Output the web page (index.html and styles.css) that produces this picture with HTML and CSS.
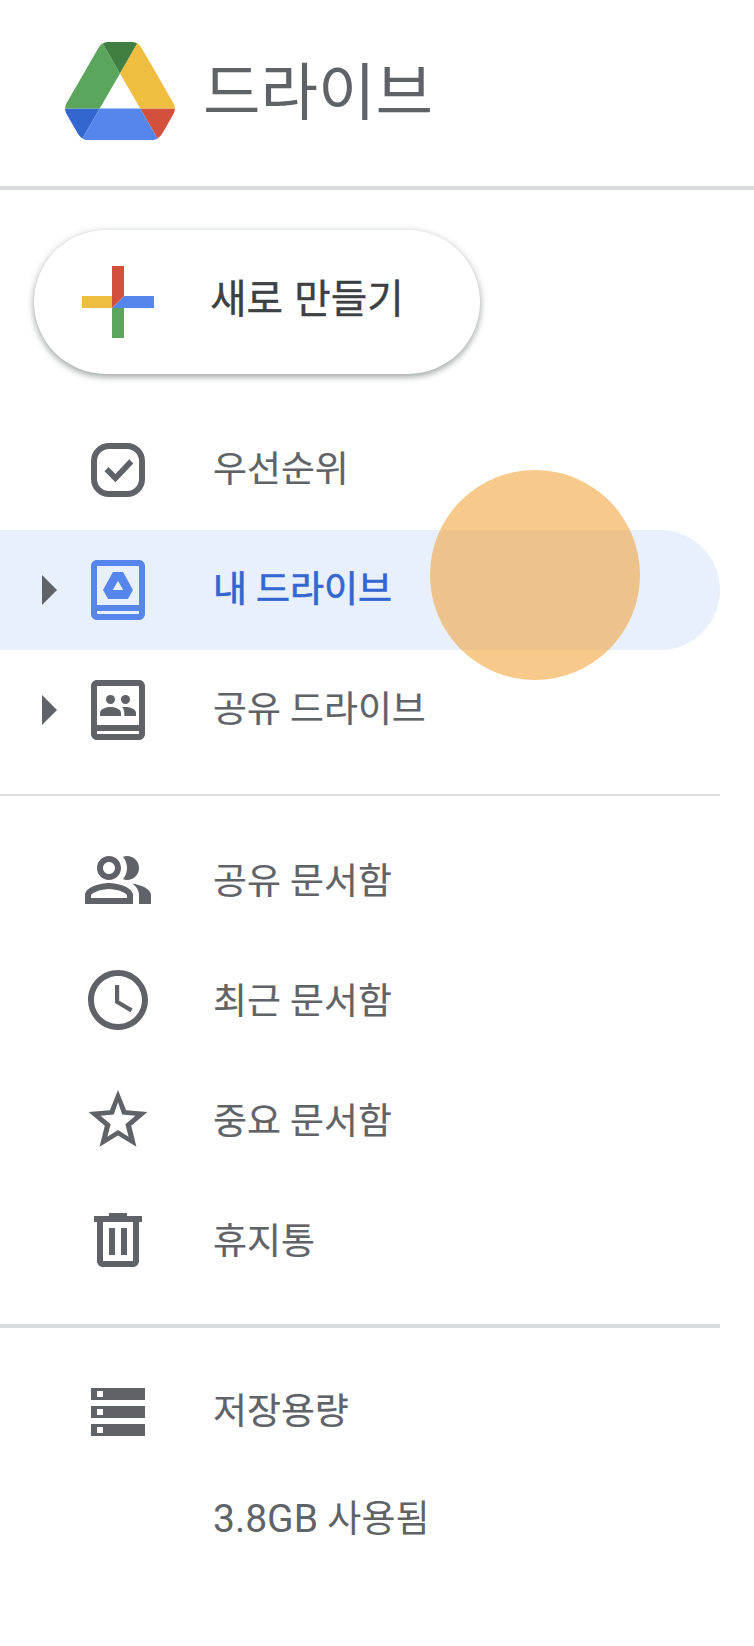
FILE: index.html
```
<!DOCTYPE html>
<html lang="ko">

<head>
    <meta charset="UTF-8">
    <meta name="viewport" content="width=device-width, initial-scale=1.0">
    <title>드라이브</title>
    <link rel="stylesheet" href="styles.css">
</head>

<body>

    <header class="header">
        <svg class="logo" viewBox="0 0 87.3 78">
            <path fill="#3367cf" d="m6.6 66.85 3.85 6.65c.8 1.4 1.95 2.5 3.3 3.3l13.75-23.8h-27.5c0 1.55.4 3.1 1.2 4.5z"/>
            <path fill="#5ba55c" d="m43.65 25-13.75-23.8c-1.35.8-2.5 1.9-3.3 3.3l-25.4 44a9.06 9.06 0 0 0-1.2 4.5h27.5z"/>
            <path fill="#d4503e" d="m73.55 76.8c1.35-.8 2.5-1.9 3.3-3.3l1.6-2.75 7.65-13.25c.8-1.4 1.2-2.95 1.2-4.5h-27.5z"/>
            <path fill="#417e41" d="m43.65 25 13.75-23.8c-1.35-.8-2.9-1.2-4.5-1.2h-18.5c-1.6 0-3.15.45-4.5 1.2z"/>
            <path fill="#5686ec" d="m59.8 53h-32.3l-13.75 23.8c1.35.8 2.9 1.2 4.5 1.2h50.8c1.6 0 3.15-.45 4.5-1.2z"/>
            <path fill="#efbd40" d="m73.4 26.5-12.7-22c-.8-1.4-1.95-2.5-3.3-3.3l-13.75 23.8 16.15 28h27.45c0-1.55-.4-3.1-1.2-4.5z"/>
        </svg>
        <h1 class="title">드라이브</h1>
    </header>

    <button type="button" class="new-button">
        <svg class="icon" viewBox="0 0 24 24">
            <path fill="#efbd40" d="M0 10h10v4H0z"/>
            <path fill="#5ba55c" d="M10 14h4v10h-4z"/>
            <path fill="#5686ec" d="M14 10h10v4H10z"/>
            <path fill="#d4503e" d="M10 0h4v10l-4 4z"/>
        </svg>
        <span class="new-text">새로 만들기</span>
    </button>

    <nav class="menu">
        <a class="item">
            <svg class="icon" viewBox="0 0 24 24">
                <rect x="4" y="4" width="16" height="16" rx="5" fill="none" stroke="currentColor" stroke-width="2"/>
                <path d="M7.5 12.4 8.85 11l2.3 2.3 4.6-4.85L17.1 9.8l-5.95 6.3z"/>
            </svg>
            <span class="label">우선순위</span>
        </a>
        <a class="item active">
            <span class="arrow"></span>
            <svg class="icon" viewBox="0 0 24 24">
                <path fill-rule="evenodd" d="M5 2h14c1.1 0 2 .9 2 2v16c0 1.1-.9 2-2 2H5c-1.1 0-2-.9-2-2V4c0-1.1.9-2 2-2zm0 2v13h14V4zm0 15v1h14v-1z"/>
                <path fill-rule="evenodd" d="M10.3 6h3.4L17 12l-1.7 3H8.7L7 12zM12 9l-1.75 3h3.5z"/>
            </svg>
            <span class="label">내 드라이브</span>
            <span class="pointer"></span>
        </a>
        <a class="item">
            <span class="arrow"></span>
            <svg class="icon" viewBox="0 0 24 24">
                <path fill-rule="evenodd" d="M5 2h14c1.1 0 2 .9 2 2v16c0 1.1-.9 2-2 2H5c-1.1 0-2-.9-2-2V4c0-1.1.9-2 2-2zm0 2v13h14V4zm0 15v1h14v-1z"/>
                <circle cx="9.5" cy="8.5" r="1.5"/>
                <circle cx="14.5" cy="8.5" r="1.5"/>
                <path d="M9.5 11C8.2 11 6 11.65 6 13v1h7v-1c0-1.35-2.2-2-3.5-2z"/>
                <path d="M14.5 11c-.35 0-.75.04-1.15.12.5.45.75 1.08.75 1.88v1H18v-1c0-1.35-2.2-2-3.5-2z"/>
            </svg>
            <span class="label">공유 드라이브</span>
        </a>
    </nav>

    <nav class="menu second">
        <a class="item">
            <svg class="icon" viewBox="0 0 24 24">
                <path d="M16.67 13.13C18.04 14.06 19 15.32 19 17v3h4v-3c0-2.18-3.57-3.47-6.33-3.87z"/>
                <path d="M15 12c2.21 0 4-1.79 4-4s-1.79-4-4-4c-.47 0-.91.1-1.33.24C14.5 5.27 15 6.58 15 8s-.5 2.73-1.33 3.76c.42.14.86.24 1.33.24z"/>
                <path d="M9 12c2.21 0 4-1.79 4-4s-1.79-4-4-4-4 1.79-4 4 1.79 4 4 4zm0-6c1.1 0 2 .9 2 2s-.9 2-2 2-2-.9-2-2 .9-2 2-2z"/>
                <path d="M9 13c-2.67 0-8 1.34-8 4v3h16v-3c0-2.66-5.33-4-8-4zm6 5H3v-.99C3.2 16.29 6.3 15 9 15s5.8 1.29 6 2v1z"/>
            </svg>
            <span class="label">공유 문서함</span>
        </a>
        <a class="item">
            <svg class="icon" viewBox="0 0 24 24">
                <path d="M12 2C6.47 2 2 6.48 2 12s4.47 10 10 10 10-4.48 10-10S17.52 2 12 2zm0 18c-4.42 0-8-3.58-8-8s3.58-8 8-8 8 3.58 8 8-3.58 8-8 8zm.4-13H11v6l5.15 3.05.7-1.2-4.45-2.6z"/>
            </svg>
            <span class="label">최근 문서함</span>
        </a>
        <a class="item">
            <svg class="icon" viewBox="0 0 24 24">
                <path fill-rule="evenodd" d="M12 2l2.7 6.75 7.1.55-5.4 4.65 1.75 6.95L12 17.2l-6.15 3.7 1.75-6.95L2.2 9.3l7.1-.55zM12 6.1l-1.4 4.1-4.4.35 3.35 2.9-1.1 4.1L12 15.3l3.55 2.25-1.1-4.1 3.35-2.9-4.4-.35z"/>
            </svg>
            <span class="label">중요 문서함</span>
        </a>
        <a class="item">
            <svg class="icon" viewBox="0 0 24 24">
                <path d="M15 4V3H9v1H4v2h1v13c0 1.1.9 2 2 2h10c1.1 0 2-.9 2-2V6h1V4h-5zm2 15H7V6h10v13zM9 8h2v9H9zm4 0h2v9h-2z"/>
            </svg>
            <span class="label">휴지통</span>
        </a>
    </nav>

    <section class="storage">
        <a class="item">
            <svg class="icon" viewBox="0 0 24 24">
                <path fill-rule="evenodd" d="M3 4h18v4H3zm2 1v2h2V5zM3 10h18v4H3zm2 1v2h2v-2zM3 16h18v4H3zm2 1v2h2v-2z"/>
            </svg>
            <span class="label">저장용량</span>
        </a>
        <p class="used"><span class="amount">3.8GB</span> 사용됨</p>
    </section>

</body>

</html>
```
FILE: styles.css
```
* {
    box-sizing: border-box;
}

body {
    margin: 0;
    background-color: #fff;
    color: #5f6368;
    font-family: "Noto Sans CJK KR", sans-serif;
}

.header {
    display: flex;
    align-items: center;
    height: 190px;
    padding: 0 0 4px 65px;
    border-bottom: 4px solid #dadce0;
}

.logo {
    width: 110px;
    height: 98px;
}

.title {
    margin: 0 0 6px 28px;
    font-size: 62.5px;
    font-weight: 400;
    line-height: 90px;
}

.new-button {
    display: flex;
    align-items: center;
    width: 446px;
    height: 144px;
    margin: 40px 0 0 34px;
    padding: 0 0 0 48px;
    border: none;
    border-radius: 72px;
    background-color: #fff;
    color: #3c4043;
    font-family: inherit;
    box-shadow: 0 3px 6px rgba(60, 64, 67, 0.4), 0 1px 9px rgba(60, 64, 67, 0.15);
}

.new-text {
    margin-left: 56px;
    padding-bottom: 12px;
    font-size: 39.7px;
    font-weight: 400;
    line-height: 60px;
    -webkit-text-stroke: 0.4px currentColor;
}

.icon {
    flex: none;
    width: 72px;
    height: 72px;
    fill: currentColor;
}

.menu {
    width: 720px;
    padding: 36px 0 24px;
    border-bottom: 2px solid #dadce0;
}

.menu.second {
    padding: 24px 0;
    border-bottom-width: 4px;
}

.item {
    position: relative;
    display: flex;
    align-items: center;
    height: 120px;
    padding-left: 82px;
}

.label {
    margin-left: 59px;
    padding-bottom: 8px;
    font-size: 36.9px;
    font-weight: 400;
    line-height: 54px;
    word-spacing: -1.2px;
    -webkit-text-stroke: 0.2px currentColor;
}

.second .label {
    padding-bottom: 4px;
}

.active {
    border-radius: 0 60px 60px 0;
    background-color: #e8f0fe;
    color: #5686ec;
}

.active .label {
    color: #3367cf;
    -webkit-text-stroke-width: 0.7px;
}

.arrow {
    width: 15px;
    margin: 0 25px 0 -40px;
    border: 15px solid transparent;
    border-left-color: #5f6368;
    border-right: none;
}

/* click highlight */
.pointer {
    position: absolute;
    top: -60px;
    left: 430px;
    width: 210px;
    height: 210px;
    border-radius: 50%;
    background-color: rgba(241, 161, 48, 0.56);
}

.storage {
    padding-top: 24px;
}

.used {
    margin: 17px 0 0 213px;
    font-size: 37px;
    line-height: 54px;
    word-spacing: -1px;
}

.amount {
    font-family: Roboto, sans-serif;
    font-size: 39px;
}
```
